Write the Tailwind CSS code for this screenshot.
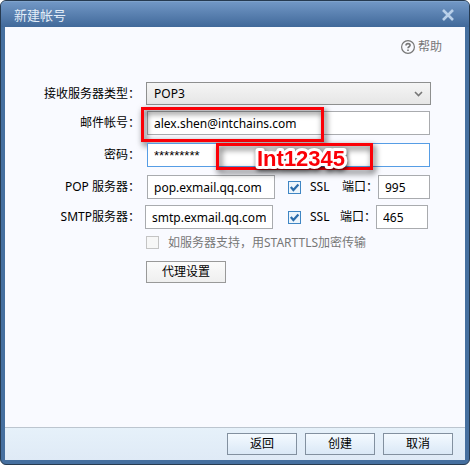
<!DOCTYPE html>
<html lang="zh-CN">
<head>
<meta charset="utf-8">
<meta name="viewport" content="width=device-width, initial-scale=1">
<title>新建帐号</title>
<script src="https://cdn.jsdelivr.net/npm/@tailwindcss/browser@4"></script>
</head>
<body class="bg-white font-['Noto_Sans','Noto_Sans_CJK_SC',sans-serif] text-xs text-black">
<div class="flex min-h-screen flex-col rounded-md border border-[#263a50] bg-[#456f9f] pr-1 pb-1 pl-1">
  <header class="-mx-1 flex h-[26px] items-center justify-between rounded-t-[5px] border-t border-[#7fa3cc] bg-linear-to-b from-[#7197c5] to-[#41699a] px-[13px] text-[#e3edf8]">
    <h1 class="text-[13px] leading-4">新建帐号</h1>
    <button type="button" aria-label="关闭" class="mr-0.5 text-[#b9d0e9]">
      <svg class="size-3" viewBox="0 0 12 12" fill="none" stroke="currentColor" stroke-width="2.6"><path d="M1 1 11 11M11 1 1 11"/></svg>
    </button>
  </header>

  <main class="flex grow flex-col bg-[#f9faff]">
    <div class="flex h-[55px] justify-end pt-3 pr-[23px]">
      <a href="#" class="flex h-4 items-center gap-[3px] text-[#777]">
        <svg class="size-[14px]" viewBox="0 0 14 14" fill="none" stroke="currentColor"><circle cx="7" cy="7" r="6.4" stroke-width="1.2"/><path d="M5 5.4C5 3 9.1 3 9.1 5.3 9.1 6.8 7 6.7 7 8.3M7 9.4V11" stroke-width="1.6"/></svg>
        帮助
      </a>
    </div>

    <form class="flex flex-col pr-[35px]">
      <div class="mb-1.5 flex items-center">
        <label for="type" class="w-[135px] shrink-0 text-right">接收服务器类型：</label>
        <div class="relative ml-1.5 -mr-px grow">
          <select id="type" class="block h-[23px] w-full appearance-none border border-[#8e8f8f] bg-linear-to-b from-[#f5f5f5] to-[#e6e6e6] px-[7px]">
            <option>POP3</option>
          </select>
          <svg class="pointer-events-none absolute top-[9px] right-2 h-[6px] w-[9px]" viewBox="0 0 9 6" fill="none" stroke="#777" stroke-width="1.6"><path d="M1 1 4.5 4.5 8 1"/></svg>
        </div>
      </div>

      <div class="mb-2 flex items-center">
        <label for="mail" class="w-[135px] shrink-0 text-right">邮件帐号：</label>
        <div class="relative ml-[7px] grow">
          <input id="mail" type="text" value="alex.shen@intchains.com" class="block h-6 w-full border border-[#a9abae] bg-white px-1.5">
          <div class="pointer-events-none absolute -top-1 -left-1.5 h-[35px] w-[183px] border-3 border-[#fb0007] drop-shadow-[2px_3px_3px_rgba(0,0,0,0.75)]"></div>
        </div>
      </div>

      <div class="mb-2 flex items-center">
        <label for="pass" class="w-[135px] shrink-0 text-right">密码：</label>
        <div class="relative ml-[7px] grow">
          <input id="pass" type="text" value="*********" class="block h-6 w-full border border-[#569de5] bg-white px-1.5 font-['Liberation_Sans',sans-serif] text-[13px]">
          <div class="pointer-events-none absolute top-0 left-[69px] h-[27px] w-[157px] border-3 border-[#fb0007] drop-shadow-[2px_3px_3px_rgba(0,0,0,0.75)]"></div>
          <svg class="pointer-events-none absolute top-0 left-[100px] h-8 w-28 drop-shadow-[1px_2px_2px_rgba(0,0,0,0.7)]" viewBox="0 0 112 32"><text x="10" y="23" class="fill-[#fb0007] stroke-white stroke-[6px] font-['Liberation_Sans',sans-serif] text-[22px] font-bold [paint-order:stroke]" stroke-linejoin="round">Int12345</text></svg>
        </div>
      </div>

      <div class="mb-1.5 flex items-center">
        <label for="pop" class="w-[135px] shrink-0 text-right">POP 服务器：</label>
        <input id="pop" type="text" value="pop.exmail.qq.com" class="ml-[7px] h-6 w-32 border border-[#a9abae] bg-white px-1.5">
        <label class="ml-[13px] flex items-center gap-[9px]">
          <span class="relative block size-[13px]">
            <input type="checkbox" checked class="block size-[13px] appearance-none border border-[#3f86c4] bg-[#edf5fc]">
            <svg class="pointer-events-none absolute inset-0" viewBox="0 0 13 13" fill="none" stroke="#2b6cab" stroke-width="2.2"><path d="M2.8 6 5.4 9 10.4 3.4"/></svg>
          </span>
          SSL
        </label>
        <label for="popport" class="ml-auto shrink-0">端口：</label>
        <input id="popport" type="text" value="995" class="h-6 w-[52px] border border-[#a9abae] bg-white px-1.5">
      </div>

      <div class="mb-[7px] flex items-center pr-0.5">
        <label for="smtp" class="w-[135px] shrink-0 text-right">SMTP服务器：</label>
        <input id="smtp" type="text" value="smtp.exmail.qq.com" class="ml-[5px] h-6 w-32 border border-[#a9abae] bg-white px-1.5">
        <label class="ml-[15px] flex items-center gap-[9px]">
          <span class="relative block size-[13px]">
            <input type="checkbox" checked class="block size-[13px] appearance-none border border-[#3f86c4] bg-[#edf5fc]">
            <svg class="pointer-events-none absolute inset-0" viewBox="0 0 13 13" fill="none" stroke="#2b6cab" stroke-width="2.2"><path d="M2.8 6 5.4 9 10.4 3.4"/></svg>
          </span>
          SSL
        </label>
        <label for="smtpport" class="ml-auto shrink-0">端口：</label>
        <input id="smtpport" type="text" value="465" class="h-6 w-[52px] border border-[#a9abae] bg-white px-1.5">
      </div>

      <label class="mb-3 ml-[141px] flex h-[13px] items-center gap-[9px] text-[#777]">
        <input type="checkbox" disabled class="size-[13px] appearance-none border border-[#c4c4c4] bg-[#f7f7f7]">
        如服务器支持，用STARTTLS加密传输
      </label>

      <button type="button" class="ml-[141px] h-[22px] w-20 border border-[#999] bg-linear-to-b from-[#fbfbfb] to-[#efefef]">代理设置</button>
    </form>
  </main>

  <footer class="flex h-[33px] items-center justify-end gap-2 border-t border-[#bcc5cf] bg-linear-to-b from-[#e6f1fa] to-[#dfeaf6] pr-3">
    <button type="button" class="h-[22px] w-[70px] border border-[#82909f] bg-linear-to-b from-[#f4faff] to-[#dae8f6]">返回</button>
    <button type="button" class="h-[22px] w-[70px] border border-[#82909f] bg-linear-to-b from-[#f4faff] to-[#dae8f6]">创建</button>
    <button type="button" class="h-[22px] w-[70px] border border-[#82909f] bg-linear-to-b from-[#f4faff] to-[#dae8f6]">取消</button>
  </footer>
</div>
</body>
</html>
